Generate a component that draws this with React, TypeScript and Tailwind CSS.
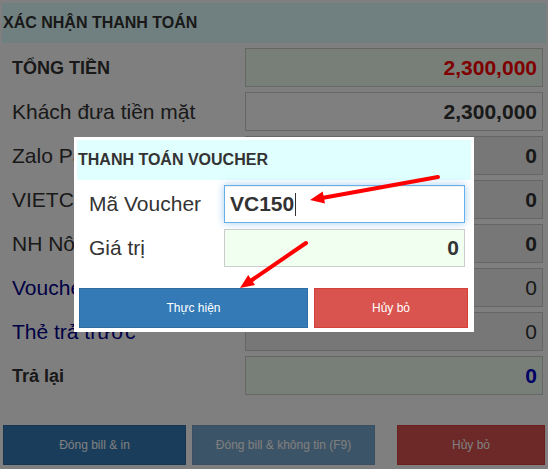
const rows = [
  { label: "TỔNG TIỀN", labelCls: "text-[18px] font-bold text-[#333]", value: "2,300,000", valueCls: "font-bold text-[#ff0000]", bg: "bg-[#f0fff0]" },
  { label: "Khách đưa tiền mặt", labelCls: "text-[21px] text-[#333]", value: "2,300,000", valueCls: "font-bold text-[#333]", bg: "bg-white" },
  { label: "Zalo Pay", labelCls: "text-[21px] text-[#333]", value: "0", valueCls: "font-bold text-[#333]", bg: "bg-[#eee]" },
  { label: "VIETCOMBANK", labelCls: "text-[21px] text-[#333]", value: "0", valueCls: "font-bold text-[#333]", bg: "bg-[#eee]" },
  { label: "NH Nông nghiệp", labelCls: "text-[21px] text-[#333]", value: "0", valueCls: "font-bold text-[#333]", bg: "bg-[#eee]" },
  { label: "Voucher", labelCls: "text-[21px] text-[#00008b]", value: "0", valueCls: "text-[#333]", bg: "bg-[#eee]" },
  { label: "Thẻ trả trước", labelCls: "text-[21px] text-[#00008b]", value: "0", valueCls: "text-[#333]", bg: "bg-[#eee]" },
  { label: "Trả lại", labelCls: "text-[18px] font-bold text-[#333]", value: "0", valueCls: "font-bold text-[#0000cd]", bg: "bg-[#f0fff0]" },
];

const App = () => {
  return (
    <div className="relative w-[548px] h-[469px] overflow-hidden bg-white font-['Liberation_Sans',Arial,sans-serif]">
      {/* page behind the modal */}
      <div className="px-[2px] pt-[3px]">
        <div className="h-[40px] bg-[#e0ffff] flex items-center pl-[1px] text-[16px] font-bold text-[#333]">
          XÁC NHẬN THANH TOÁN
        </div>
      </div>
      <div className="mt-[5px] flex flex-col gap-[5px] pr-[5px]">
        {rows.map((r) => (
          <div key={r.label} className="h-[39px] flex items-center justify-between">
            <span className={`pl-[12px] leading-none ${r.labelCls}`}>{r.label}</span>
            <div className={`w-[298px] h-full border border-[#ccc] flex items-center justify-end pr-[5px] text-[21px] ${r.bg} ${r.valueCls}`}>
              {r.value}
            </div>
          </div>
        ))}
      </div>
      <div className="mt-[30px] flex pl-[3px] text-[12px] text-white">
        <button className="w-[183px] h-[40px] bg-[#337ab7] border border-[#2e6da4]">Đóng bill &amp; in</button>
        <button className="ml-[6px] w-[183px] h-[40px] bg-[#337ab7] border border-[#2e6da4] opacity-65">
          Đóng bill &amp; không tin (F9)
        </button>
        <button className="ml-[22px] w-[148px] h-[40px] bg-[#d9534f] border border-[#d43f3a]">Hủy bỏ</button>
      </div>

      {/* backdrop */}
      <div className="absolute inset-0 bg-black/50" />

      {/* voucher modal */}
      <div className="absolute left-[74px] top-[137px] w-[400px] h-[195px] bg-white p-[3px]">
        <div className="h-[40px] bg-[#e0ffff] flex items-center pl-[1px] text-[16px] font-bold text-[#333]">
          THANH TOÁN VOUCHER
        </div>
        <div className="mt-[5px] flex items-center h-[38px]">
          <span className="pl-[12px] w-[147px] text-[21px] text-[#333]">Mã Voucher</span>
          <div className="w-[241px] h-full border border-[#66afe9] shadow-[inset_0_1px_1px_rgba(0,0,0,0.075),0_0_8px_rgba(102,175,233,0.6)] flex items-center pl-[5px] text-[21px] font-bold text-[#333]">
            VC150
            <span className="ml-[1px] w-[1px] h-[23px] bg-[#333]" />
          </div>
        </div>
        <div className="mt-[6px] flex items-center h-[38px]">
          <span className="pl-[12px] w-[147px] text-[21px] text-[#333]">Giá trị</span>
          <div className="w-[241px] h-full border border-[#ccc] bg-[#f0fff0] flex items-center justify-end pr-[5px] text-[21px] font-bold text-[#333]">
            0
          </div>
        </div>
        <div className="mt-[21px] flex pl-[2px] gap-[6px] text-[12px] text-white">
          <button className="w-[229px] h-[40px] bg-[#337ab7] border border-[#2e6da4]">Thực hiện</button>
          <button className="w-[154px] h-[40px] bg-[#d9534f] border border-[#d43f3a]">Hủy bỏ</button>
        </div>
      </div>

      {/* annotation arrows */}
      <svg className="absolute inset-0 pointer-events-none" width="548" height="469" viewBox="0 0 548 469">
        <line x1="438" y1="177" x2="322" y2="198" stroke="#f00" strokeWidth="4" strokeLinecap="round" />
        <polygon points="310,200 325,203.4 322.7,191.6" fill="#f00" />
        <line x1="306" y1="243" x2="252" y2="280" stroke="#f00" strokeWidth="4" strokeLinecap="round" />
        <polygon points="240,288 255,285.1 248.2,275.1" fill="#f00" />
      </svg>
    </div>
  );
};

export default App;
